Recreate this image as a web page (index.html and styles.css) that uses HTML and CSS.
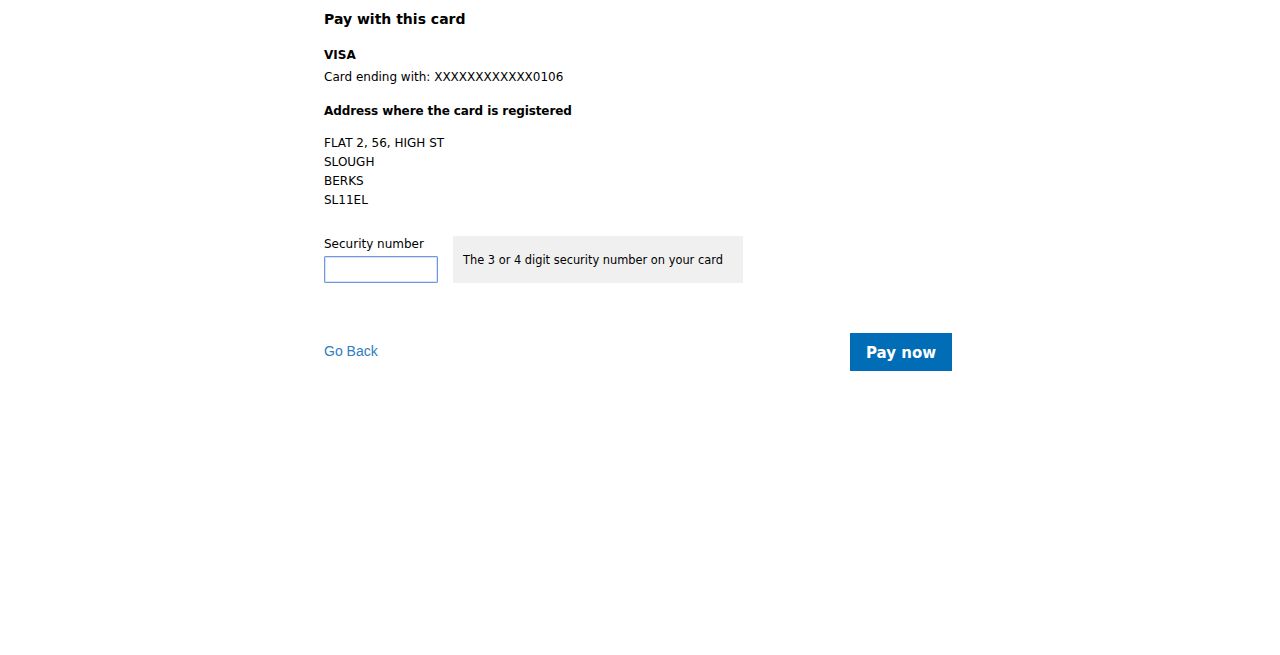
FILE: index.html
```html
<!DOCTYPE html>
<html lang="en">
<head>
<meta charset="utf-8">
<title>Pay with this card</title>
<link rel="stylesheet" href="styles.css">
</head>
<body>
<div class="page">
  <h1 class="title">Pay with this card</h1>
  <div class="card">
    <div class="card-type">VISA</div>
    <div class="card-num">Card ending with: XXXXXXXXXXXX0106</div>
  </div>
  <h2 class="subhead">Address where the card is registered</h2>
  <div class="address">
    <div>FLAT 2, 56, HIGH ST</div>
    <div>SLOUGH</div>
    <div>BERKS</div>
    <div>SL11EL</div>
  </div>
  <div class="security-row">
    <div class="field">
      <label class="field-label" for="cvv">Security number</label>
      <input class="field-input" id="cvv" type="text">
    </div>
    <div class="hint">The 3 or 4 digit security number on your card</div>
  </div>
  <div class="actions">
    <a class="back" href="#">Go Back</a>
    <button class="pay" type="button">Pay now</button>
  </div>
</div>
</body>
</html>
```

FILE: styles.css
```css
html, body {
  margin: 0;
  padding: 0;
  background: #ffffff;
}

body {
  font-family: "DejaVu Sans", Verdana, sans-serif;
  font-size: 12px;
  color: #000000;
}

.page {
  width: 628px;
  margin: 0 auto;
  padding: 9px 0 0 0;
  position: relative;
  left: -2px;
}

.title {
  margin: 0;
  font-size: 14px;
  font-weight: bold;
  line-height: 20px;
}

.card {
  margin-top: 15px;
}

.card-type {
  font-weight: bold;
  line-height: 22px;
}

.card-num {
  line-height: 22px;
}

.subhead {
  margin: 12px 0 0 0;
  font-size: 12px;
  font-weight: bold;
  line-height: 22px;
  letter-spacing: -0.1px;
}

.address {
  margin-top: 12px;
  line-height: 19px;
}

.security-row {
  margin-top: 26px;
  display: flex;
  align-items: flex-end;
  gap: 15px;
}

.field {
  display: flex;
  flex-direction: column;
}

.field-label {
  line-height: 16px;
  margin-bottom: 4px;
}

.field-input {
  box-sizing: border-box;
  width: 114px;
  height: 27px;
  margin: 0;
  border: 1px solid #6f98df;
  box-shadow: inset 0 0 0 1px #d6e2f7;
  border-radius: 1px;
  padding: 2px 4px;
  font-family: inherit;
  font-size: 12px;
  outline: none;
  background: #fff;
}

.hint {
  box-sizing: border-box;
  width: 290px;
  height: 47px;
  background: #f0f0f0;
  display: flex;
  align-items: center;
  padding: 1px 10px 0 10px;
  font-size: 11.4px;
}

.actions {
  margin-top: 50px;
  display: flex;
  justify-content: space-between;
  align-items: center;
}

.back {
  font-family: "Liberation Sans", Arial, sans-serif;
  font-size: 14px;
  color: #2f7cc0;
  text-decoration: none;
  line-height: 18px;
  margin-top: -2px;
}

.pay {
  box-sizing: border-box;
  height: 38px;
  width: 102px;
  border: 0;
  margin: 0;
  background: #006db6;
  color: #ffffff;
  font-family: "DejaVu Sans", Verdana, sans-serif;
  font-size: 15px;
  font-weight: bold;
  padding: 2px 0 0 0;
  cursor: pointer;
}
```
